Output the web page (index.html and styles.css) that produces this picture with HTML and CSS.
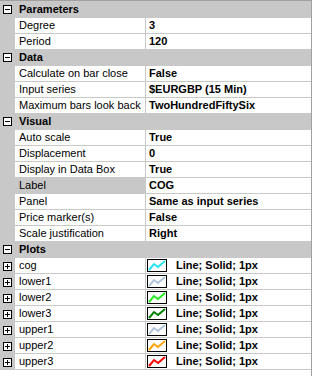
FILE: index.html
```html
<!DOCTYPE html>
<html lang="en">
<head>
    <meta charset="UTF-8">
    <title>Properties</title>
    <link rel="stylesheet" href="styles.css">
</head>
<body>
    <div class="grid">
        <div class="cat first"><span class="gutter"><span class="box minus"></span></span><span class="cat-title">Parameters</span></div>
        <div class="row"><span class="gutter"></span><span class="name">Degree</span><span class="value">3</span></div>
        <div class="row"><span class="gutter"></span><span class="name">Period</span><span class="value">120</span></div>

        <div class="cat"><span class="gutter"><span class="box minus"></span></span><span class="cat-title">Data</span></div>
        <div class="row"><span class="gutter"></span><span class="name">Calculate on bar close</span><span class="value">False</span></div>
        <div class="row"><span class="gutter"></span><span class="name">Input series</span><span class="value">$EURGBP (15 Min)</span></div>
        <div class="row"><span class="gutter"></span><span class="name">Maximum bars look back</span><span class="value">TwoHundredFiftySix</span></div>

        <div class="cat"><span class="gutter"><span class="box minus"></span></span><span class="cat-title">Visual</span></div>
        <div class="row"><span class="gutter"></span><span class="name">Auto scale</span><span class="value">True</span></div>
        <div class="row"><span class="gutter"></span><span class="name">Displacement</span><span class="value">0</span></div>
        <div class="row"><span class="gutter"></span><span class="name">Display in Data Box</span><span class="value">True</span></div>
        <div class="row selected"><span class="gutter"></span><span class="name">Label</span><span class="value">COG</span></div>
        <div class="row"><span class="gutter"></span><span class="name">Panel</span><span class="value">Same as input series</span></div>
        <div class="row"><span class="gutter"></span><span class="name">Price marker(s)</span><span class="value">False</span></div>
        <div class="row"><span class="gutter"></span><span class="name">Scale justification</span><span class="value">Right</span></div>

        <div class="cat"><span class="gutter"><span class="box minus"></span></span><span class="cat-title">Plots</span></div>
        <div class="row"><span class="gutter"><span class="box plus"></span></span><span class="name">cog</span><span class="value plot"><span class="swatch"><svg width="18" height="11" viewBox="0 0 18 11"><polyline points="1,10 6,4 10,7 17,1" fill="none" stroke="#22e4ef" stroke-width="2"/></svg></span><span>Line; Solid; 1px</span></span></div>
        <div class="row"><span class="gutter"><span class="box plus"></span></span><span class="name">lower1</span><span class="value plot"><span class="swatch"><svg width="18" height="11" viewBox="0 0 18 11"><polyline points="1,10 6,4 10,7 17,1" fill="none" stroke="#b0c4de" stroke-width="2"/></svg></span><span>Line; Solid; 1px</span></span></div>
        <div class="row"><span class="gutter"><span class="box plus"></span></span><span class="name">lower2</span><span class="value plot"><span class="swatch"><svg width="18" height="11" viewBox="0 0 18 11"><polyline points="1,10 6,4 10,7 17,1" fill="none" stroke="#22ee22" stroke-width="2"/></svg></span><span>Line; Solid; 1px</span></span></div>
        <div class="row"><span class="gutter"><span class="box plus"></span></span><span class="name">lower3</span><span class="value plot"><span class="swatch"><svg width="18" height="11" viewBox="0 0 18 11"><polyline points="1,10 6,4 10,7 17,1" fill="none" stroke="#008000" stroke-width="2"/></svg></span><span>Line; Solid; 1px</span></span></div>
        <div class="row"><span class="gutter"><span class="box plus"></span></span><span class="name">upper1</span><span class="value plot"><span class="swatch"><svg width="18" height="11" viewBox="0 0 18 11"><polyline points="1,10 6,4 10,7 17,1" fill="none" stroke="#b0c4de" stroke-width="2"/></svg></span><span>Line; Solid; 1px</span></span></div>
        <div class="row"><span class="gutter"><span class="box plus"></span></span><span class="name">upper2</span><span class="value plot"><span class="swatch"><svg width="18" height="11" viewBox="0 0 18 11"><polyline points="1,10 6,4 10,7 17,1" fill="none" stroke="#ffa500" stroke-width="2"/></svg></span><span>Line; Solid; 1px</span></span></div>
        <div class="row"><span class="gutter"><span class="box plus"></span></span><span class="name">upper3</span><span class="value plot"><span class="swatch"><svg width="18" height="11" viewBox="0 0 18 11"><polyline points="1,10 6,4 10,7 17,1" fill="none" stroke="#ff0000" stroke-width="2"/></svg></span><span>Line; Solid; 1px</span></span></div>
    </div>
</body>
</html>
```

FILE: styles.css
```css
body {
    margin: 0;
    width: 312px;
    height: 376px;
    overflow: hidden;
    background-color: #fff;
    font-family: "Liberation Sans", Arial, sans-serif;
    font-size: 11px;
    color: #000;
}
.grid {
    width: 311px;
    height: 375px;
    border-top: 1px solid #a0a0a0;
    border-right: 1px solid #a0a0a0;
}
.cat, .row {
    display: grid;
    grid-template-columns: 15px 131px 1fr;
    height: 16px;
    line-height: 15px;
}
.cat {
    background-color: #c8c8c8;
}
.cat.first {
    height: 17px;
    padding-top: 1px;
    box-sizing: border-box;
}
.gutter {
    background-color: #c8c8c8;
    display: flex;
    align-items: center;
    padding-left: 3px;
    height: 16px;
}
.cat .gutter {
    height: 15px;
}
.cat-title {
    grid-column: 2 / 4;
    font-weight: bold;
    padding-left: 4px;
}
.name {
    padding-left: 4px;
    border-right: 1px solid #c8c8c8;
    border-bottom: 1px solid #c8c8c8;
    white-space: nowrap;
    overflow: hidden;
}
.value {
    padding-left: 3px;
    font-weight: bold;
    border-bottom: 1px solid #c8c8c8;
    white-space: nowrap;
    overflow: hidden;
}
.selected .name {
    background-color: #c8c8c8;
}
.box {
    position: relative;
    width: 9px;
    height: 9px;
    box-sizing: border-box;
    border: 1px solid #000;
    background-color: #fff;
}
.box::before {
    content: "";
    position: absolute;
    left: 1px;
    top: 3px;
    width: 5px;
    height: 1px;
    background-color: #000;
}
.plus::after {
    content: "";
    position: absolute;
    left: 3px;
    top: 1px;
    width: 1px;
    height: 5px;
    background-color: #000;
}
.plot {
    display: flex;
    align-items: center;
    gap: 9px;
    padding-left: 1px;
}
.swatch {
    display: flex;
    width: 20px;
    height: 13px;
    box-sizing: border-box;
    border: 1px solid #000;
    background-color: #fff;
}
```
